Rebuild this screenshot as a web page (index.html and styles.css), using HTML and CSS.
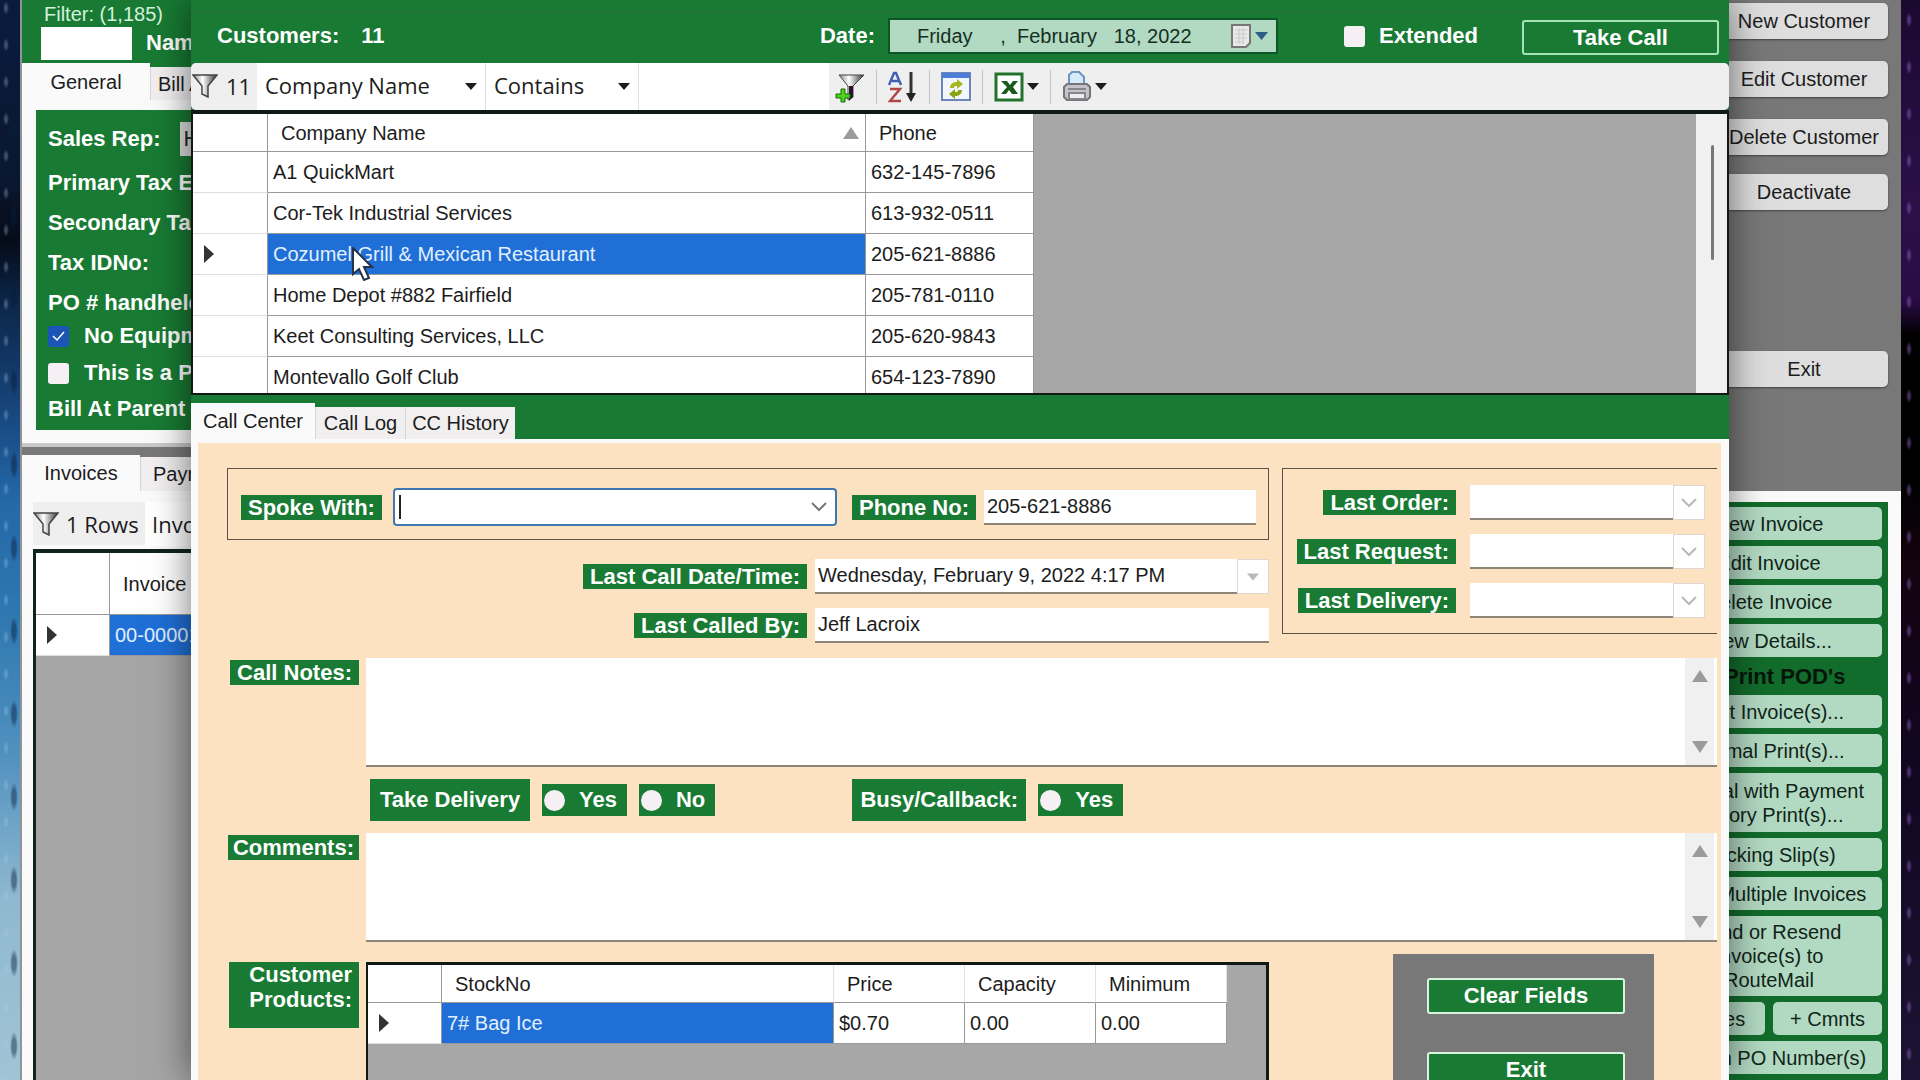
FILE: index.html
```html
<!DOCTYPE html>
<html lang="en">
<head>
<meta charset="utf-8">
<title>Call Center</title>
<link rel="stylesheet" href="styles.css">
</head>
<body>
<svg class="defs" aria-hidden="true">
  <defs>
    <linearGradient id="metal" x1="0" x2="1"><stop offset="0" stop-color="#8a8a8a"/><stop offset=".4" stop-color="#fff"/><stop offset="1" stop-color="#333"/></linearGradient>
    <symbol id="funnel" viewBox="0 0 26 24"><path d="M1 1h24l-9 11v11l-6-3v-8z" fill="url(#metal)" stroke="#444" stroke-width="1.5"/></symbol>
    <symbol id="caret-down" viewBox="0 0 12 7"><path d="M0 0h12L6 7z" fill="currentColor"/></symbol>
    <symbol id="chevron" viewBox="0 0 16 10"><path d="M1 1l7 7 7-7" fill="none" stroke="currentColor" stroke-width="2"/></symbol>
    <symbol id="up" viewBox="0 0 16 12"><path d="M8 0l8 12H0z" fill="#9b9b9b"/></symbol>
    <symbol id="down" viewBox="0 0 16 12"><path d="M8 12l8-12H0z" fill="#9b9b9b"/></symbol>
    <symbol id="current" viewBox="0 0 10 18"><path d="M0 0l10 9-10 9z" fill="#333"/></symbol>
  </defs>
</svg>
<div class="desktop">
  <main class="window">
    <div class="upper">
      <section class="customer">
        <div class="lookup">
          <label class="filter" for="filter">Filter: (1,185)</label>
          <div class="lookup-row"><input id="filter" type="text"><span class="strong">Name</span></div>
        </div>
        <div class="tabs"><button class="tab active tab-general">General</button><button class="tab tab-bill">Bill At</button></div>
        <div class="general">
          <div class="general-panel strong">
            <label class="rep">Sales Rep: <select><option>House</option></select></label>
            <span>Primary Tax Ex</span>
            <span>Secondary Tax</span>
            <span>Tax IDNo:</span>
            <span>PO # handheld</span>
            <label><input type="checkbox" class="check" checked>No Equipment</label>
            <label><input type="checkbox" class="check">This is a Parent</label>
            <span>Bill At Parent</span>
          </div>
        </div>
      </section>
      <aside class="customer-actions">
        <button class="plain">New Customer</button>
        <button class="plain">Edit Customer</button>
        <button class="plain">Delete Customer</button>
        <button class="plain deactivate">Deactivate</button>
        <button class="plain leave">Exit</button>
      </aside>
    </div>
    <div class="lower">
      <div class="tabs invoice-tabs"><button class="tab active tab-invoices">Invoices</button><button class="tab tab-payments">Payments</button></div>
      <div class="lower-body">
        <section class="invoices">
          <div class="invoice-bar"><span class="rows"><svg width="26" height="24"><use href="#funnel"/></svg>1 Rows</span><span class="by">Invoice</span></div>
          <div class="invoice-grid">
            <table>
              <thead><tr><th class="rowhead"></th><th class="invoice-col">Invoice</th></tr></thead>
              <tbody><tr><td class="rowhead"><svg width="10" height="18"><use href="#current"/></svg></td><td class="selected">00-000012</td></tr></tbody>
            </table>
          </div>
        </section>
        <aside class="invoice-actions">
          <button class="mint">New Invoice</button>
          <button class="mint">Edit Invoice</button>
          <button class="mint">Delete Invoice</button>
          <button class="mint">View Details...</button>
          <span class="pod">Print POD's</span>
          <button class="mint">Print Invoice(s)...</button>
          <button class="mint">Normal Print(s)...</button>
          <button class="mint two">Normal with Payment<br>History Print(s)...</button>
          <button class="mint">Packing Slip(s)</button>
          <button class="mint">Print Multiple Invoices</button>
          <button class="mint three">Send or Resend<br>Invoice(s) to<br>RouteMail</button>
          <div class="pair"><button class="mint">+ Notes</button><button class="mint">+ Cmnts</button></div>
          <button class="mint">Assign PO Number(s)</button>
        </aside>
      </div>
    </div>
  </main>

  <section class="dialog">
    <div class="titleline"></div>
    <header class="head strong">
      <span>Customers:</span><span class="count">11</span>
      <label class="date" for="date">Date:</label>
      <div class="datebox"><input id="date" type="text" value="Friday     ,  February   18, 2022">
        <svg width="40" height="28" viewBox="0 0 40 28"><path d="M3 3h18v18l-4 4H3z" fill="#e8e8e8" stroke="#777" stroke-width="2"/><path d="M6 8h12M6 12h12M6 16h12M6 20h9M10 6v16M14 6v16" stroke="#c8c8c8"/><path d="M26 10h13l-6.500 8z" fill="#2d5f86"/></svg>
      </div>
      <label class="extended"><input type="checkbox" class="check">Extended</label>
      <button class="outline take">Take Call</button>
    </header>
    <div class="toolbar">
      <span class="hits"><svg width="26" height="24"><use href="#funnel"/></svg>11</span>
      <span class="drop field"><select aria-label="Field"><option>Company Name</option></select><svg width="12" height="7"><use href="#caret-down"/></svg></span>
      <span class="drop match"><select aria-label="Match"><option>Contains</option></select><svg width="12" height="7"><use href="#caret-down"/></svg></span>
      <input class="query" type="text" aria-label="Search text">
      <div class="tools">
        <button aria-label="Add filter"><svg width="30" height="32" viewBox="0 0 30 32"><path d="M4 4h25L18 15v11l-5 3V15z" fill="url(#metal)" stroke="#444"/><path d="M14 15h4v11l-4 4z" fill="#301030"/><path d="M6 18h4v5h5v4h-5v4H6v-4H1v-4h5z" fill="#4ad41c" stroke="#146a0a"/></svg></button>
        <i class="sep"></i>
        <button aria-label="Sort"><svg width="30" height="32" viewBox="0 0 30 32"><path d="M1 14L6 2h2l5 12M4 10h7" fill="none" stroke="#4060b8" stroke-width="2.500"/><path d="M2 18h10L2 30h11" fill="none" stroke="#b04848" stroke-width="2.500"/><path d="M23 1v23" stroke="#333" stroke-width="3"/><path d="M18 22h10l-5 9z" fill="#222"/></svg></button>
        <i class="sep"></i>
        <button aria-label="Refresh"><svg width="30" height="32" viewBox="0 0 30 32"><path d="M1 2h28v27H1z" fill="#f1f6ff" stroke="#6a86b8" stroke-width="2"/><path d="M1 2h28v5H1z" fill="#4f7ed8"/><path d="M9 17c0-4 3-6 7-6V8l6 5-6 5v-3c-2 0-3 0-3 2z" fill="#a8b81c"/><path d="M21 19c0 4-3 6-7 6v3l-6-5 6-5v3c2 0 3 0 3-2z" fill="#8aa414"/></svg></button>
        <i class="sep"></i>
        <button class="menu" aria-label="Export"><svg width="30" height="32" viewBox="0 0 30 32"><path d="M2 3h26v26H2z" fill="#fff" stroke="#23722c" stroke-width="3"/><path d="M7 10h6l3 4 3-4h5l-5 6 5 7h-6l-3-4-3 4H7l6-7z" fill="#185c1c"/></svg><svg width="12" height="7"><use href="#caret-down"/></svg></button>
        <i class="sep"></i>
        <button class="menu" aria-label="Print"><svg width="30" height="32" viewBox="0 0 30 32"><path d="M7 14V4l3-3h7l5 5v8z" fill="#d7eafa" stroke="#6a96c4" stroke-width="2"/><path d="M2 16l3-3h20l3 3v10l-3 3H5l-3-3z" fill="#c4c4c8" stroke="#75757b" stroke-width="2"/><path d="M6 18h18M7 22h16v6H7z" fill="#eee" stroke="#85858b" stroke-width="2"/></svg><svg width="12" height="7"><use href="#caret-down"/></svg></button>
      </div>
    </div>

    <div class="grid customers">
      <div class="grid-view">
        <table>
          <thead><tr><th class="rowhead"></th><th class="name-col"><span class="sorted">Company Name<svg width="16" height="12"><use href="#up"/></svg></span></th><th class="phone-col">Phone</th></tr></thead>
          <tbody>
            <tr><td class="rowhead"></td><td>A1 QuickMart</td><td>632-145-7896</td></tr>
            <tr><td class="rowhead"></td><td>Cor-Tek Industrial Services</td><td>613-932-0511</td></tr>
            <tr><td class="rowhead"><svg width="10" height="18"><use href="#current"/></svg></td><td class="selected">Cozumel Grill &amp; Mexican Restaurant</td><td>205-621-8886</td></tr>
            <tr><td class="rowhead"></td><td>Home Depot #882 Fairfield</td><td>205-781-0110</td></tr>
            <tr><td class="rowhead"></td><td>Keet Consulting Services, LLC</td><td>205-620-9843</td></tr>
            <tr><td class="rowhead"></td><td>Montevallo Golf Club</td><td>654-123-7890</td></tr>
          </tbody>
        </table>
      </div>
      <div class="scroll"><i></i></div>
    </div>

    <nav class="tabs call-tabs"><button class="tab active tab-center">Call Center</button><button class="tab tab-log">Call Log</button><button class="tab tab-history">CC History</button></nav>

    <form class="call">
      <div class="summary">
        <div class="contact">
          <div class="group">
            <label class="tag" for="spoke">Spoke With:</label>
            <div class="combo"><i class="cursor"></i><input id="spoke" type="text"><button type="button" aria-label="Open list"><svg width="16" height="10"><use href="#chevron"/></svg></button></div>
            <label class="tag" for="phone">Phone No:</label>
            <input class="box phone" id="phone" type="text" value="205-621-8886">
          </div>
          <div class="line"><label class="tag" for="last">Last Call Date/Time:</label><span class="pick last"><input class="box" id="last" type="text" value="Wednesday, February 9, 2022 4:17 PM"><b><svg width="12" height="8"><use href="#caret-down"/></svg></b></span></div>
          <div class="line"><label class="tag" for="by">Last Called By:</label><input class="box last" id="by" type="text" value="Jeff Lacroix"></div>
        </div>
        <div class="history">
          <div class="line"><label class="tag" for="order">Last Order:</label><span class="pick"><select class="box" id="order" disabled></select><b><svg width="16" height="10"><use href="#chevron"/></svg></b></span></div>
          <div class="line"><label class="tag" for="request">Last Request:</label><span class="pick"><select class="box" id="request" disabled></select><b><svg width="16" height="10"><use href="#chevron"/></svg></b></span></div>
          <div class="line"><label class="tag" for="delivery">Last Delivery:</label><span class="pick"><select class="box" id="delivery" disabled></select><b><svg width="16" height="10"><use href="#chevron"/></svg></b></span></div>
        </div>
      </div>

      <div class="details">
        <label class="tag" for="notes">Call Notes:</label>
        <div class="memo"><textarea id="notes"></textarea><span class="rail"><svg width="16" height="12"><use href="#up"/></svg><svg width="16" height="12"><use href="#down"/></svg></span></div>

        <div class="choices">
          <span class="tag tall">Take Delivery</span>
          <label class="choice"><input type="radio" name="take">Yes</label>
          <label class="choice"><input type="radio" name="take">No</label>
          <span class="tag tall busy">Busy/Callback:</span>
          <label class="choice"><input type="radio" name="busy">Yes</label>
        </div>

        <label class="tag" for="comments">Comments:</label>
        <div class="memo"><textarea id="comments"></textarea><span class="rail"><svg width="16" height="12"><use href="#up"/></svg><svg width="16" height="12"><use href="#down"/></svg></span></div>

        <span class="tag products-tag">Customer<br>Products:</span>
        <div class="bottom">
          <div class="grid products">
            <table>
              <thead><tr><th class="rowhead"></th><th class="stock-col">StockNo</th><th class="num-col">Price</th><th class="num-col">Capacity</th><th class="num-col">Minimum</th></tr></thead>
              <tbody><tr><td class="rowhead"><svg width="10" height="18"><use href="#current"/></svg></td><td class="selected">7# Bag Ice</td><td>$0.70</td><td>0.00</td><td>0.00</td></tr></tbody>
            </table>
          </div>
          <div class="finish"><button type="button" class="outline">Clear Fields</button><button type="button" class="outline">Exit</button></div>
        </div>
      </div>
    </form>
    <svg class="pointer" width="22" height="34" viewBox="0 0 22 34"><path d="M1 1v26l6-5 5 11 5-2-5-11h8z" fill="#fff" stroke="#26334d" stroke-width="2"/></svg>
  </section>
</div>
</body>
</html>
```
FILE: styles.css
```css
* { box-sizing: border-box; }
html, body { margin: 0; height: 100%; overflow: hidden; }
body { font: 20px/24px "Liberation Sans", Arial, sans-serif; color: #1c1c1c; }
button, input, select, textarea { font: inherit; color: inherit; margin: 0; padding: 0; border: 0; border-radius: 0; }
button { white-space: nowrap; }
select { appearance: none; opacity: 1; }
.defs { position: absolute; width: 0; height: 0; }
svg { flex: none; }
.strong { font-weight: bold; font-size: 22px; color: #fff; }

.desktop {
  position: relative; height: 100vh; padding: 0 19px 0 20px; overflow: hidden;
  background:
    radial-gradient(ellipse at 6px 8px, rgba(170, 205, 235, .3) 1px, transparent 3px) 0 0 / 19px 37px repeat-y,
    radial-gradient(ellipse at 14px 50px, rgba(5, 30, 60, .45) 2px, transparent 4px) 0 0 / 19px 83px repeat-y,
    radial-gradient(ellipse at 8px 20px, rgba(165, 110, 220, .4) 1px, transparent 3px) 100% 0 / 19px 47px repeat-y,
    linear-gradient(#0a1b3e, #0a1730 180px, #060b18 240px, #0c2547 300px, #164278 400px, #2468a8 500px, #2f78b0 620px, #4f90be 750px, #8fb8d0 900px, #a0c4d4) 0 0 / 50% 100% no-repeat,
    linear-gradient(#1a0930, #2b1048 200px, #2a0c45 300px, #000 335px, #000 480px, #12030f 560px, #120620 760px, #1c1434) 100% 0 / 50% 100% no-repeat;
}
.window { height: 100%; display: flex; flex-direction: column; background: #787878; border-left: 2px solid #8f9499; overflow: hidden; }
.upper { display: flex; height: 455px; flex: none; justify-content: space-between; }
.customer { width: 400px; height: 447px; background: #187a33; border-bottom: 4px solid #c9c9c9; }
.lookup { height: 63px; padding: 2px 0 0 19px; }
.filter { display: block; padding-left: 3px; color: #d4f2dc; }
.lookup-row { display: flex; gap: 14px; align-items: center; height: 34px; }
.lookup-row input { width: 91px; height: 33px; background: #fff; }
.tabs { display: flex; align-items: flex-end; }
.tab { background: #f1eff0; border-left: 1px solid #d5d5d5; }
.tab.active { background: #fbfafb; border: 0; }
.tab-general { width: 128px; height: 37px; }
.tab-bill { width: 80px; height: 33px; padding-left: 7px; text-align: left; }
.general { background: #fbfafb; height: 343px; padding: 10px 0 0 14px; }
.general-panel {
  background: #187a33; height: 320px; padding: 7px 0 0 12px; white-space: nowrap;
  display: grid; align-items: center; grid-template-rows: 44px 44px 36px 44px 36px 30px 44px 28px; align-content: start;
}
.general-panel label { display: flex; align-items: center; gap: 15px; }
.general-panel .rep { gap: 19px; }
.general-panel .rep select { width: 120px; height: 34px; padding-left: 4px; background: #dcdcdc; color: #222; font-weight: normal; }
.check { appearance: none; width: 21px; height: 21px; background: #f6f0f4; border-radius: 3px; }
.check:checked { background: #1c55b8 url("data:image/svg+xml,%3Csvg xmlns='http://www.w3.org/2000/svg' viewBox='0 0 21 21'%3E%3Cpath d='M5 10l4 4 7-8' fill='none' stroke='white' stroke-width='1.500'/%3E%3C/svg%3E"); }

.customer-actions { width: 181px; padding: 3px 13px 0 0; display: flex; flex-direction: column; gap: 22px; }
.plain { height: 36px; background: #dedede; border-radius: 5px; box-shadow: 0 1px 2px #444; }
.deactivate { margin-top: -3px; }
.leave { margin-top: 119px; }

.lower { flex: 1; min-height: 0; display: flex; flex-direction: column; }
.invoice-tabs { height: 36px; flex: none; }
.tab-invoices { width: 118px; height: 36px; }
.tab-payments { width: 120px; height: 34px; padding-left: 12px; text-align: left; }
.lower-body { flex: 1; min-height: 0; background: #fbfafb; display: flex; justify-content: space-between; padding: 11px 13px 0 11px; }
.invoices { width: 400px; display: flex; flex-direction: column; }
.invoice-bar { height: 47px; flex: none; display: flex; align-items: flex-start; font: 22px/44px "Open Sans", sans-serif; }
.rows { display: flex; align-items: center; gap: 7px; width: 112px; height: 43px; background: #f0eff0; }
.by { padding-left: 7px; background: #fff; flex: 1; }
.invoice-grid { flex: 1; background: #a5a5a5; border: solid #10241a; border-width: 4px 0 0 3px; }
.invoice-grid th { height: 62px; }
.invoice-col { width: 200px; }

table { border-collapse: separate; border-spacing: 0; table-layout: fixed; background: #fff; }
th, td { height: 41px; padding: 0 0 0 5px; text-align: left; font-weight: normal; white-space: nowrap; border: solid #989898; border-width: 0 1px 1px 0; }
th { height: 38px; padding-left: 13px; }
.rowhead { width: 74px; padding: 0 0 0 11px; border-right: 1px solid #989898; }
td.rowhead { border-bottom-color: #ddd; }
td svg { display: block; }
.selected { background: #1f6fd6; color: #e2efff; }

.invoice-actions { width: 244px; padding: 5px 6px 0 12px; background: #126c2b; display: flex; flex-direction: column; gap: 6px; }
.mint { flex: none; height: 33px; background: #b2d9c2; border-radius: 5px; color: #102418; }
.mint.two { height: 59px; }
.mint.three { height: 80px; }
.pod { height: 26px; line-height: 28px; flex: none; padding-left: 68px; font-weight: bold; font-size: 22px; color: #06140a; }
.pair { display: flex; gap: 8px; }
.pair .mint { flex: 1; }

/* The call dialog lies over the main window. */
.dialog { position: absolute; top: 0; bottom: 0; left: 191px; right: 191px; overflow: hidden; background: #fbfafb; box-shadow: 0 0 36px rgba(0, 0, 0, .55); display: flex; flex-direction: column; }
.titleline { height: 12px; flex: none; background: #187a33; border-bottom: 1px solid #35683f; }
.head { height: 51px; flex: none; background: #187a33; display: flex; align-items: center; padding: 0 10px 3px 26px; }
.count { margin-left: 22px; }
.date { margin-left: auto; }
.datebox { width: 388px; height: 34px; margin: 0 67px 0 14px; padding-left: 28px; background: #b2d9c2; outline: 2px solid #0d5724; outline-offset: -1px; display: flex; align-items: center; gap: 32px; font-size: 20px; font-weight: normal; }
.datebox input { width: 280px; background: none; color: #15301f; white-space: pre; }
.extended { display: flex; align-items: center; gap: 14px; }
.outline { background: #187a33; color: #fff; font-weight: bold; font-size: 22px; line-height: 24px; border: 2px solid #d8f2df; border-radius: 3px; }
.take { width: 197px; height: 35px; margin: 3px 0 0 44px; border-color: #a5e3b6; }
.toolbar { height: 47px; flex: none; background: #f0eff0; border-radius: 5px; display: flex; align-items: stretch; font: 22px/44px "Open Sans", sans-serif; box-shadow: 0 0 0 6px #187a33; }
.hits { width: 66px; display: flex; align-items: center; gap: 8px; padding: 0 0 2px 1px; }
.drop { position: relative; display: flex; background: #fff; border-right: 1px solid #e0e0e0; }
.drop select { width: 100%; height: 44px; line-height: 44px; background: #fff; padding-left: 8px; }
.drop svg { position: absolute; right: 8px; top: 20px; }
.field { width: 229px; }
.match { width: 153px; }
.query { width: 190px; background: #fff; }
.tools { display: flex; align-items: center; gap: 11px; padding-left: 6px; }
.tools button { background: none; display: flex; align-items: center; gap: 3px; }
.sep { width: 1px; height: 34px; background: #c4c4c4; }

.grid { background: #a7a7a7; border: 3px solid #101a14; }
.customers { height: 285px; flex: none; display: flex; border-width: 4px 2px 2px 2px; position: relative; }
.customers .rowhead { width: 75px; }
.grid-view { flex: 1; overflow: hidden; }
.name-col { width: 598px; padding-right: 6px; }
.phone-col { width: 168px; }
.sorted { display: flex; justify-content: space-between; align-items: center; }
.scroll { width: 31px; background: #f0f0f0; padding: 31px 0 0 15px; }
.scroll i { display: block; width: 3px; height: 115px; background: #777; border-radius: 2px; }

.call-tabs { height: 44px; flex: none; background: #187a33; }
.tab-center { width: 124px; height: 36px; padding-bottom: 1px; }
.tab-log { width: 90px; height: 32px; }
.tab-history { width: 110px; height: 32px; }

.call { flex: 1; min-height: 0; overflow: hidden; background: #fde2c1; border: solid #fbfafb; border-width: 4px 8px 0 7px; padding: 25px 4px 0 29px; }
.tag { background: #187a33; color: #fff; font-weight: bold; font-size: 22px; line-height: 25px; padding: 0 7px; white-space: nowrap; }
.box { height: 35px; background: #fff; padding-left: 3px; border-bottom: 2px solid #8c8578; }
.summary { display: flex; gap: 13px; height: 190px; }
.contact { flex: 1; }
.group { height: 72px; border: 1px solid #5d5148; display: flex; align-items: center; padding: 6px 12px 0 13px; }
.combo { flex: 1; height: 38px; margin: 0 15px 0 11px; border: 2px solid #3f78ad; border-radius: 4px; background: #fff; display: flex; align-items: center; }
.combo .cursor { width: 2px; height: 24px; margin-left: 4px; background: #222; }
.combo input { flex: 1; min-width: 0; outline: 0; }
.combo button { width: 32px; background: none; color: #777; line-height: 0; }
.phone { width: 272px; margin-left: 8px; }
.line { display: flex; justify-content: flex-end; align-items: center; gap: 8px; height: 49px; }
.contact .group + .line { margin-top: 12px; }
.last { width: 454px; }
.pick { position: relative; display: flex; }
.pick .box { width: 100%; }
.pick b { position: absolute; right: 0; top: 0; width: 32px; height: 35px; background: #fff; border: 1px solid #ded8d0; display: flex; align-items: center; justify-content: center; color: #b8b8b8; }
.history { width: 435px; height: 166px; border: 1px solid #5d5148; border-right: 0; padding: 9px 12px 0 0; }
.history .line { gap: 14px; }
.history .pick { width: 235px; }

.details { display: grid; grid-template-columns: 132px 1fr; column-gap: 7px; row-gap: 12px; align-items: start; }
.details > .tag { justify-self: end; margin-top: 2px; }
.details > .tag[for="comments"] { padding: 0 5px; }
.memo { height: 109px; background: #fff; border-bottom: 2px solid #8c8578; display: flex; padding-right: 3px; }
.memo textarea { flex: 1; background: none; resize: none; outline: 0; }
.rail { width: 29px; background: #f0f0f0; display: flex; flex-direction: column; justify-content: space-between; align-items: center; padding: 12px 0 12px; }
.choices { grid-column: 2; padding-left: 4px; height: 42px; display: flex; align-items: center; gap: 12px; }
.tag.tall { line-height: 42px; width: 160px; text-align: center; }
.tag.busy { width: 174px; margin-left: 125px; }
.choice { height: 32px; display: flex; align-items: center; gap: 14px; padding: 0 10px 0 2px; background: #187a33; color: #fff; font-weight: bold; font-size: 22px; }
.choice input { appearance: none; width: 21px; height: 21px; border-radius: 50%; background: #f6f0f4; }
.details > .products-tag { width: 130px; height: 66px; margin-top: 8px; text-align: right; }
.bottom { display: flex; align-items: flex-start; }
.products { flex: 1; height: 300px; margin-top: 8px; border-left-width: 2px; }
.products th { border-right-color: #e2e2e2; }
.products th.rowhead { border-right-color: #989898; }
.stock-col { width: 392px; }
.num-col { width: 131px; }
.finish { width: 261px; height: 300px; margin: 0 63px 0 124px; padding: 24px 29px 0 34px; background: #787878; display: flex; flex-direction: column; gap: 38px; }
.finish .outline { height: 36px; }

.pointer { position: absolute; left: 161px; top: 247px; }
```
